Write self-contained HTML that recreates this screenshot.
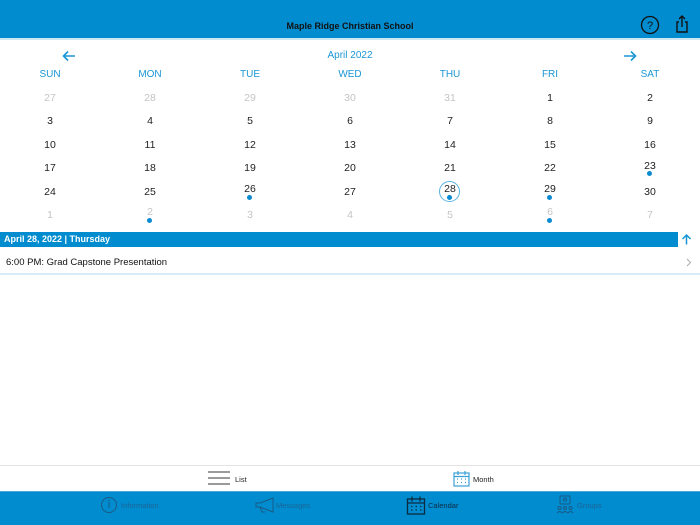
<!DOCTYPE html>
<html><head><meta charset="utf-8"><style>
*{margin:0;padding:0;box-sizing:border-box}
body{width:700px;height:525px;position:relative;overflow:hidden;background:#fff;font-family:"Liberation Sans",sans-serif}
.a{position:absolute}
.hd{left:0;top:0;width:700px;height:38px;background:#008ccf}
.c{position:absolute;width:100px;text-align:center;font-size:10.5px;line-height:14px;color:#222}
.g{color:#c4c4c4}
.dn{color:#1a96d4;font-size:10px}
.dot{position:absolute;width:5px;height:5px;border-radius:50%;background:#0a8ad0}
#cal{position:absolute;left:0;top:2px;width:700px;height:230px}
</style></head><body>
<div class="a hd"></div>
<div class="a" style="left:0;top:38px;width:700px;height:2px;background:#cfe6f3"></div>
<div class="a" style="left:0;top:20px;width:700px;text-align:center;font-size:9px;font-weight:bold;color:#111;line-height:12px">Maple Ridge Christian School</div>
<svg class="a" style="left:640px;top:15px" width="20" height="20" viewBox="0 0 20 20"><circle cx="10" cy="10" r="8.5" fill="none" stroke="#111" stroke-width="1.3"/><text x="10" y="14" font-size="11" text-anchor="middle" font-family="Liberation Sans" fill="#111">?</text></svg>
<svg class="a" style="left:674px;top:14px" width="16" height="20" viewBox="0 0 16 20"><path d="M5 8H3v10h10V8h-2M8 13V2M5 5l3-3 3 3" fill="none" stroke="#111" stroke-width="1.4"/></svg>

<div id="cal">
<svg class="a" style="left:62px;top:48px" width="14" height="12" viewBox="0 0 14 12"><path d="M13 6H2M6 1.5L1.5 6 6 10.5" fill="none" stroke="#1a96d4" stroke-width="1.6"/></svg>
<svg class="a" style="left:623px;top:48px" width="14" height="12" viewBox="0 0 14 12"><path d="M1 6h11M8 1.5L12.5 6 8 10.5" fill="none" stroke="#1a96d4" stroke-width="1.6"/></svg>
<div class="a" style="left:0;top:48px;width:700px;text-align:center;font-size:10px;color:#1a96d4;line-height:12px">April 2022</div>

<div class="c dn" style="left:0;top:66px">SUN</div><div class="c dn" style="left:100px;top:66px">MON</div><div class="c dn" style="left:200px;top:66px">TUE</div><div class="c dn" style="left:300px;top:66px">WED</div><div class="c dn" style="left:400px;top:66px">THU</div><div class="c dn" style="left:500px;top:66px">FRI</div><div class="c dn" style="left:600px;top:66px">SAT</div>

<div class="c g" style="left:0;top:89px">27</div><div class="c g" style="left:100px;top:89px">28</div><div class="c g" style="left:200px;top:89px">29</div><div class="c g" style="left:300px;top:89px">30</div><div class="c g" style="left:400px;top:89px">31</div><div class="c" style="left:500px;top:89px">1</div><div class="c" style="left:600px;top:89px">2</div>

<div class="c" style="left:0;top:112px">3</div><div class="c" style="left:100px;top:112px">4</div><div class="c" style="left:200px;top:112px">5</div><div class="c" style="left:300px;top:112px">6</div><div class="c" style="left:400px;top:112px">7</div><div class="c" style="left:500px;top:112px">8</div><div class="c" style="left:600px;top:112px">9</div>

<div class="c" style="left:0;top:136px">10</div><div class="c" style="left:100px;top:136px">11</div><div class="c" style="left:200px;top:136px">12</div><div class="c" style="left:300px;top:136px">13</div><div class="c" style="left:400px;top:136px">14</div><div class="c" style="left:500px;top:136px">15</div><div class="c" style="left:600px;top:136px">16</div>

<div class="c" style="left:0;top:159px">17</div><div class="c" style="left:100px;top:159px">18</div><div class="c" style="left:200px;top:159px">19</div><div class="c" style="left:300px;top:159px">20</div><div class="c" style="left:400px;top:159px">21</div><div class="c" style="left:500px;top:159px">22</div><div class="c" style="left:600px;top:157px">23</div><div class="dot" style="left:647px;top:169px"></div>

<div class="c" style="left:0;top:183px">24</div><div class="c" style="left:100px;top:183px">25</div><div class="c" style="left:200px;top:180px">26</div><div class="dot" style="left:247px;top:193px"></div><div class="c" style="left:300px;top:183px">27</div>
<div class="a" style="left:439px;top:179px;width:21px;height:21px;border-radius:50%;border:1px solid #5ab4e2"></div>
<div class="c" style="left:400px;top:180px">28</div><div class="dot" style="left:447px;top:193px"></div>
<div class="c" style="left:500px;top:180px">29</div><div class="dot" style="left:547px;top:193px"></div>
<div class="c" style="left:600px;top:183px">30</div>

<div class="c g" style="left:0;top:206px">1</div><div class="c g" style="left:100px;top:203px">2</div><div class="dot" style="left:147px;top:216px"></div><div class="c g" style="left:200px;top:206px">3</div><div class="c g" style="left:300px;top:206px">4</div><div class="c g" style="left:400px;top:206px">5</div><div class="c g" style="left:500px;top:203px">6</div><div class="dot" style="left:547px;top:216px"></div><div class="c g" style="left:600px;top:206px">7</div>
</div>

<div class="a" style="left:0;top:232px;width:678px;height:15px;background:#008ccf"></div>
<div class="a" style="left:4px;top:233px;font-size:9px;font-weight:bold;color:#fff;line-height:13px">April 28, 2022 | Thursday</div>
<svg class="a" style="left:681px;top:234px" width="11" height="11" viewBox="0 0 11 11"><path d="M5.5 10.5V1M1.5 5L5.5 1l4 4" fill="none" stroke="#1a96d4" stroke-width="1.5"/></svg>
<div class="a" style="left:6px;top:257px;font-size:9.5px;color:#111;line-height:12px">6:00 PM: Grad Capstone Presentation</div>
<svg class="a" style="left:686px;top:258px" width="6" height="9" viewBox="0 0 6 9"><path d="M1 1l3.5 3.5L1 8" fill="none" stroke="#aaa" stroke-width="1"/></svg>
<div class="a" style="left:0;top:273px;width:700px;height:2px;background:#d6ebf6"></div>

<div class="a" style="left:0;top:465px;width:700px;height:1px;background:#e4e4e4"></div>
<div class="a" style="left:208px;top:471px;width:22px;height:2px;background:#9a9a9a"></div>
<div class="a" style="left:208px;top:477px;width:22px;height:2px;background:#9a9a9a"></div>
<div class="a" style="left:208px;top:483px;width:22px;height:2px;background:#9a9a9a"></div>
<div class="a" style="left:235px;top:475px;font-size:7.5px;color:#222;line-height:10px">List</div>
<svg class="a" style="left:453px;top:470px" width="17" height="17" viewBox="0 0 17 17"><rect x="1" y="3" width="15" height="13" fill="none" stroke="#3aa0d8" stroke-width="1.2"/><path d="M1 6.5h15M5 1v4M12 1v4" stroke="#3aa0d8" stroke-width="1.2"/><path d="M4 9h1M8 9h1M12 9h1M4 12.5h1M8 12.5h1M12 12.5h1" stroke="#3aa0d8" stroke-width="1.2"/></svg>
<div class="a" style="left:473px;top:475px;font-size:7.5px;color:#222;line-height:10px">Month</div>

<div class="a" style="left:0;top:491px;width:700px;height:34px;background:#008ccf"></div>
<div class="a" style="left:0;top:491px;width:700px;height:1px;background:#4aa8d8"></div>
<svg class="a" style="left:100px;top:496px" width="18" height="18" viewBox="0 0 18 18"><circle cx="9" cy="9" r="7.5" fill="none" stroke="#1a5a85" stroke-width="1"/><path d="M9 6v6" stroke="#1a5a85"/><circle cx="9" cy="4.5" r=".7" fill="#1a5a85"/></svg>
<div class="a" style="left:121px;top:501px;font-size:7.5px;color:#1c6594;line-height:10px">Information</div>
<svg class="a" style="left:255px;top:497px" width="20" height="16" viewBox="0 0 20 16"><path d="M1 6h4l13-5v14L5 10H1zM5 10l2 5h3" fill="none" stroke="#1a5a85" stroke-width="1"/></svg>
<div class="a" style="left:276px;top:501px;font-size:7.5px;color:#1c6594;line-height:10px">Messages</div>
<svg class="a" style="left:406px;top:495px" width="20" height="20" viewBox="0 0 20 20"><rect x="1.5" y="4" width="17" height="15" fill="none" stroke="#0d2a40" stroke-width="1.3"/><path d="M1.5 8h17M6 1.5v5M14 1.5v5" stroke="#0d2a40" stroke-width="1.3"/><path d="M5 11.5h1.5M9.5 11.5h1.5M14 11.5h1.5M5 15h1.5M9.5 15h1.5M14 15h1.5" stroke="#0d2a40" stroke-width="1.2"/></svg>
<div class="a" style="left:428px;top:501px;font-size:7.5px;color:#0d2a40;line-height:10px">Calendar</div>
<svg class="a" style="left:556px;top:495px" width="18" height="19" viewBox="0 0 18 19"><rect x="4" y="1" width="10" height="8" rx="1" fill="none" stroke="#1a5a85"/><circle cx="9" cy="4.5" r="1.5" fill="none" stroke="#1a5a85"/><circle cx="3.5" cy="13" r="1.5" fill="none" stroke="#1a5a85"/><circle cx="9" cy="13" r="1.5" fill="none" stroke="#1a5a85"/><circle cx="14.5" cy="13" r="1.5" fill="none" stroke="#1a5a85"/><path d="M1 18q2.5-3 5 0M6.5 18q2.5-3 5 0M12 18q2.5-3 5 0" fill="none" stroke="#1a5a85"/></svg>
<div class="a" style="left:577px;top:501px;font-size:7.5px;color:#1c6594;line-height:10px">Groups</div>
</body></html>
